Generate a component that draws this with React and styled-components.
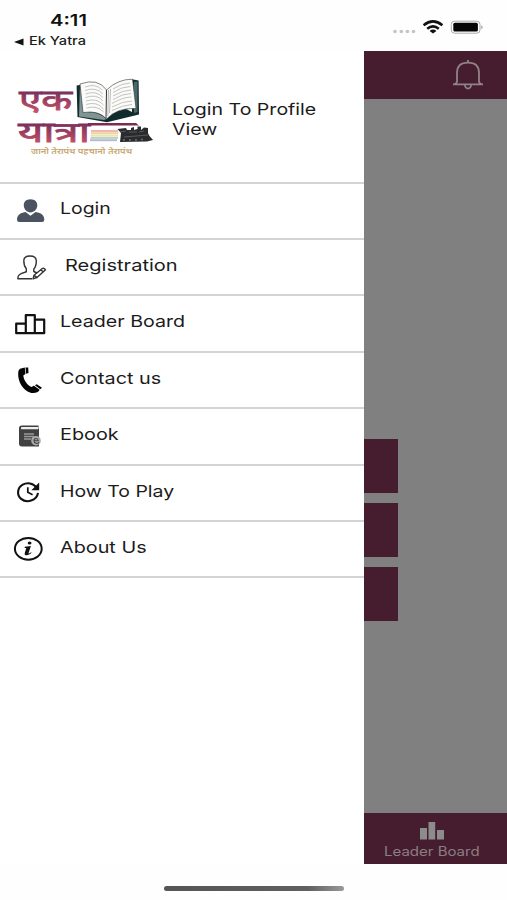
import styled, { createGlobalStyle } from 'styled-components';

const GlobalStyle = createGlobalStyle`
    body {
        margin: 0;
        background: #fff;
        font-family: Inter, 'Liberation Sans', sans-serif;
    }

    svg {
        display: block;
    }
`;

const Screen = styled.div`
    width: 507px;
    height: 900px;
    display: flex;
    flex-direction: column;
    overflow: hidden;
    background: #fefefe;
    color: #1c1c1c;
`;

const Wide = styled.span`
    display: inline-block;
    white-space: nowrap;
    transform: scaleX(${(props) => props.$stretch || 1.2});
    transform-origin: ${(props) => props.$origin || 'left'};
`;

const StatusBar = styled.header`
    height: 51px;
    flex: none;
    display: flex;
    justify-content: space-between;
    box-sizing: border-box;
    padding: 10px 23px 0 14px;
`;

const Time = styled.div`
    margin-left: 36px;
    font-size: 16px;
    line-height: 20px;
    font-weight: 600;
    color: #111;
`;

const BackLink = styled.div`
    display: flex;
    align-items: center;
    gap: 5px;
    margin-top: 4px;
    font-size: 11.5px;
    line-height: 15px;
    font-weight: 500;
`;

const Signals = styled.div`
    display: flex;
    align-items: flex-start;
    padding-top: 9px;
`;

const Body = styled.div`
    height: 813px;
    flex: none;
    display: flex;
`;

const Drawer = styled.aside`
    width: 364px;
    flex: none;
    background: #fff;
`;

const Profile = styled.div`
    height: 130.5px;
    display: flex;
    box-sizing: border-box;
    padding: 25px 0 0 14px;
`;

const ProfileText = styled.p`
    margin: 23px 0 0 18px;
    font-size: 16.5px;
    line-height: 20px;
`;

const Menu = styled.nav`
    border-top: 2px solid #d4d4d4;
`;

const MenuItem = styled.div`
    height: 56.43px;
    display: flex;
    align-items: center;
    box-sizing: border-box;
    border-bottom: 2px solid #d4d4d4;
    font-size: 16.5px;
`;

const IconSlot = styled.div`
    width: ${(props) => (props.$wide ? 65 : 60)}px;
    flex: none;
`;

const Label = styled.div`
    line-height: 20px;
    padding-bottom: 4.5px;
`;

const Page = styled.main`
    flex: 1;
    display: flex;
    flex-direction: column;
    background: #808080;
`;

const AppBar = styled.div`
    height: 47.5px;
    display: flex;
    justify-content: flex-end;
    box-sizing: border-box;
    padding: 8px 23px 0 0;
    background: #461d2e;
`;

const Buttons = styled.div`
    flex: 1;
    display: flex;
    flex-direction: column;
    gap: 10.5px;
    padding-top: 340.5px;
`;

const PageButton = styled.div`
    width: 34px;
    height: 53.5px;
    background: #461d2e;
`;

const TabBar = styled.div`
    height: 51.5px;
    box-sizing: border-box;
    padding: 8px 7px 0 0;
    display: flex;
    flex-direction: column;
    align-items: center;
    gap: 4px;
    background: #461d2e;
    color: #8c7d84;
    font-size: 12.5px;
    line-height: 16px;
`;

const HomeArea = styled.footer`
    flex: 1;
    display: flex;
    justify-content: center;
    padding-top: 22px;
`;

const HomeIndicator = styled.div`
    width: 180px;
    height: 5px;
    border-radius: 3px;
    background: linear-gradient(90deg, #555 0, #606060 80%, #999 100%);
`;

function SignalIcons() {
    return (
        <svg width="92" height="18" viewBox="392 19 92 18">
            <g fill="#c4c4c4">
                <circle cx="395" cy="31.5" r="1.8" />
                <circle cx="401.3" cy="31.5" r="1.8" />
                <circle cx="407.4" cy="31.5" r="1.8" />
                <circle cx="413.5" cy="31.5" r="1.8" />
            </g>
            <g fill="none" stroke="#111" strokeWidth="2.5">
                <path d="M423.6 25.2 Q433 17.5 442.4 25.2" />
                <path d="M427.2 28.7 Q433 24 438.8 28.7" />
            </g>
            <path d="M429.6 30.9 Q433 28.2 436.4 30.9 L433 33.4Z" fill="#111" />
            <rect x="451.3" y="21.2" width="28.7" height="12" rx="3.2" fill="#fff" stroke="#aaa" />
            <rect x="453.3" y="22.8" width="24.6" height="8.8" rx="1.5" fill="#050505" />
            <path d="M481.3 25.2 Q484 27.2 481.3 29.2Z" fill="#999" />
        </svg>
    );
}

function BookLines({ d }) {
    return <path d={d} fill="none" stroke="#b4b4b4" strokeWidth=".8" />;
}

function Logo() {
    return (
        <svg width="140" height="84" viewBox="14 76 140 84">
            <defs>
                <linearGradient id="wine" x1="0" y1=".2" x2="0" y2=".8">
                    <stop offset="0" stopColor="#7b2f5c" />
                    <stop offset="1" stopColor="#cb5469" />
                </linearGradient>
            </defs>
            <g
                fill="url(#wine)"
                stroke="url(#wine)"
                strokeWidth=".8"
                fontFamily="'Noto Sans Devanagari', 'Noto Sans', sans-serif"
                fontWeight="400"
            >
                <text x="19" y="109.5" fontSize="28" textLength="53" lengthAdjust="spacingAndGlyphs">एक</text>
                <text x="18" y="141.5" fontSize="28" textLength="72" lengthAdjust="spacingAndGlyphs">यात्रा</text>
            </g>
            <path d="M88 123H136L139 125.6H88Z" fill="#7b2c51" />
            <path d="M80 85L76.6 85.5L77.5 117L107 122.2L139 114.5L138.6 80.5L132 79.3V112Z" fill="#102c2d" />
            <path d="M134 82L137.5 81.5V112L134 113Z" fill="#4c6a6a" />
            <path d="M80 84L83.5 112Q99 111 106.5 119L104 120L79 116.5Z" fill="#7e9594" />
            <path d="M80 84Q98 77.5 106.5 90Q118 79 132.5 79.2L136 108.5Q117 107.5 106.5 119Q99 110 83 112.5Z" fill="#fbfbfa" stroke="#333" strokeWidth=".6" />
            <path d="M106.5 90L106 118.5" stroke="#333" />
            <path d="M108.5 90L107.8 116M110.5 89L109.5 113" stroke="#bbb" strokeWidth="1" />
            <BookLines d="M85 87Q96 83 102 90M85 90.5Q96 86.5 103 94M85.5 94Q96 90 103 97.5M85.5 97.5Q97 93.5 103 101M86 101Q97 97.5 103.5 105M86 104.5Q97 101 103.5 109M86.5 108Q97 105 103.5 112" />
            <BookLines d="M113 89Q122 83 130 83M113 92.5Q122 86.5 130.5 86.5M113 96Q123 90 131 90M113 99.5Q123 93.5 131 93.5M112 103.5Q123 97 131.5 97M112 107Q123 101 132 101M112 110.5Q123 105 132 104.5" />
            <g strokeWidth="2" fill="none">
                <path d="M91 131H118" stroke="#f0b7b2" />
                <path d="M91 133.3H118" stroke="#f3cda3" />
                <path d="M90.5 135.6H118" stroke="#eee5ae" />
                <path d="M90.5 137.9H118" stroke="#b5d7b9" />
                <path d="M90 140.2H117" stroke="#b4b8dc" />
            </g>
            <path d="M117.5 129L126 128L127 130H131V128L134 127V130L137.5 129V126.5H141V130L144 127.5L148 128V133L149.5 136L153 140L147 141.5L120 142L121 133Z" fill="#292b2d" />
            <path d="M120 132L126 131M129 132L137 132M139 132L144 131M124 137L148 135" stroke="#666" strokeWidth=".8" fill="none" />
            <g fill="#777">
                <circle cx="124" cy="140" r=".9" />
                <circle cx="130" cy="140" r=".9" />
                <circle cx="136" cy="140" r=".9" />
                <circle cx="142" cy="139.5" r=".9" />
            </g>
            <text x="31" y="153.5" fill="#c7a670" fontFamily="'Noto Sans Devanagari', 'Noto Sans', sans-serif" fontSize="7.5" fontWeight="600" textLength="101" lengthAdjust="spacingAndGlyphs">
                जानो तेरापंथ पहचानो तेरापंथ
            </text>
        </svg>
    );
}

// Menu icons share a 60x54 box so each one keeps its own optical offset
function MenuIcon({ children }) {
    return (
        <svg width="60" height="54" viewBox="0 0 60 54" fill="none">
            {children}
        </svg>
    );
}

const items = [
    {
        label: 'Login',
        stretch: 1.18,
        icon: (
            <g fill="#4b5361">
                <path d="M30.5 15.2C26 15.2 23.5 18 23.8 21.6C24 25.5 27 28.5 30.5 28.5C34 28.5 37 25.5 37.3 21.6C37.5 18 35 15.2 30.5 15.2Z" />
                <path d="M25.5 28L30.5 31.7L35.5 28C42 29 44.3 31.5 44.3 35.8Q44.3 38 42 38H19.2Q17 38 17 35.8C17 31.5 19.5 29 25.5 28Z" />
            </g>
        ),
    },
    {
        label: 'Registration',
        stretch: 1.215,
        wide: true,
        icon: (
            <g stroke="#333" strokeWidth="1.4" strokeLinejoin="round">
                <path d="M32 38.8H17.8C17.5 34.5 20.5 33.7 26.3 31.8V28.8C24.3 26.5 23.8 23.5 23.8 20.8C23.8 17.3 26.3 16 30 16C34 16 36.3 17.4 36.3 21C36.3 24 35.9 26.8 33.8 29V31.5L37 33" />
                <path d="M33 38.9L34 35.3L42 28.7Q44 27.6 45.5 29.8L37 37.5ZM34.3 35.5L37 37.3M40.7 29.8L43.4 32" />
            </g>
        ),
    },
    {
        label: 'Leader Board',
        stretch: 1.19,
        icon: (
            <path d="M16.2 36.2V26.7H25.8V18.2H34.8V22.7H44.2V36.2ZM25.8 26.5V36M34.8 22.7V36" stroke="#111" strokeWidth="2.2" strokeLinejoin="round" />
        ),
    },
    {
        label: 'Contact us',
        stretch: 1.2,
        icon: (
            <g fill="#050505">
                <path d="M20 15.8L24.8 14.6L25.4 21L23.3 22.5C24 27.7 27 31.7 31.2 34L34 32.8L39.6 36.8C38.5 39.5 34.3 40.7 30.5 39.7C22.6 37.2 17.6 28.2 18.2 19.7C18.4 17.8 19 16.6 20 15.8Z" />
                <path d="M25.5 14.5L28.2 14.4L28.5 20L26 20.7ZM34.9 32.2L36.8 31.2L42 34.8L40.3 36.2Z" />
            </g>
        ),
    },
    {
        label: 'Ebook',
        stretch: 1.2,
        icon: (
            <g>
                <path d="M19 19Q19 16.5 22 16.5H38.5V20H39V37.5H22Q19 37.5 19 34.5Z" fill="#414141" />
                <path d="M21.5 18H38V20.3H21.5Q20 19.2 21.5 18Z" fill="#eee" />
                <path d="M24 25H34M24 27.5H34M24 30H31" stroke="#999" strokeWidth="1.5" />
                <circle cx="36" cy="31.7" r="4.8" fill="#aaa" />
                <path d="M33.8 31.7H38.3C38 28.7 34 28.9 34 31.8C34 34.7 37.6 35 39 33.3" stroke="#444" strokeWidth="1.1" />
            </g>
        ),
    },
    {
        label: 'How To Play',
        stretch: 1.18,
        icon: (
            <g stroke="#111" strokeWidth="2.1">
                <path d="M36.3 21.3C33.2 16.9 27 16.2 22.7 18.7C17 22 16.7 29.3 21.1 32.9C26.5 37.3 36.8 35 38 26.8" />
                <path d="M39.2 16.5V24.2H31.4Z" fill="#111" stroke="none" />
                <path d="M27.8 21.2V26.3L32.6 28.7" strokeWidth="1.7" />
            </g>
        ),
    },
    {
        label: 'About Us',
        stretch: 1.2,
        icon: (
            <g>
                <ellipse cx="28.3" cy="26.8" rx="13.4" ry="10.9" stroke="#111" strokeWidth="2" />
                <ellipse cx="29.6" cy="20.9" rx="1.9" ry="1.5" fill="#111" />
                <path d="M24.8 24.8L30.9 24.1L28.4 31.5Q29.5 31.7 31 30.2L31.6 30.8C29.3 33.5 24 34.5 24.7 31.3L26.3 25.9H24.6Z" fill="#111" />
            </g>
        ),
    },
];

function Bell() {
    return (
        <svg width="32" height="32" viewBox="0 0 32 32" fill="none" stroke="#8f8387" strokeWidth="1.8">
            <path d="M1 25.3Q5 25.3 5 22V14C5 7 9.5 3.7 16 3.7C22.5 3.7 27 7 27 14V22Q27 25.3 31 25.3M1 25.3H31" />
            <path d="M16 1V4M12.8 25.5Q13.3 29.5 16 29.5Q18.7 29.5 19.2 25.5" />
        </svg>
    );
}

export default function App() {
    return (
        <>
            <GlobalStyle />
            <Screen>
                <StatusBar>
                    <div>
                        <Time>
                            <Wide $stretch={1.26}>4:11</Wide>
                        </Time>
                        <BackLink>
                            <svg width="10" height="8" viewBox="0 0 10 8">
                                <path d="M0 4L9.5 .5V7.5Z" fill="#111" />
                            </svg>
                            <Wide $stretch={1.27}>Ek Yatra</Wide>
                        </BackLink>
                    </div>
                    <Signals>
                        <SignalIcons />
                    </Signals>
                </StatusBar>
                <Body>
                    <Drawer>
                        <Profile>
                            <Logo />
                            <ProfileText>
                                <Wide $stretch={1.185}>Login To Profile</Wide>
                                <br />
                                <Wide $stretch={1.185}>View</Wide>
                            </ProfileText>
                        </Profile>
                        <Menu>
                            {items.map((item) => (
                                <MenuItem key={item.label}>
                                    <IconSlot $wide={item.wide}>
                                        <MenuIcon>{item.icon}</MenuIcon>
                                    </IconSlot>
                                    <Label>
                                        <Wide $stretch={item.stretch}>{item.label}</Wide>
                                    </Label>
                                </MenuItem>
                            ))}
                        </Menu>
                    </Drawer>
                    <Page>
                        <AppBar>
                            <Bell />
                        </AppBar>
                        <Buttons>
                            <PageButton />
                            <PageButton />
                            <PageButton />
                        </Buttons>
                        <TabBar>
                            <svg width="24" height="19" viewBox="0 0 24 19" fill="#8c8c8c">
                                <path d="M0 7H7V18.5H0ZM8.5 1H15.2V18.5H8.5ZM17 9H24V18.5H17Z" />
                            </svg>
                            <Wide $origin="center">Leader Board</Wide>
                        </TabBar>
                    </Page>
                </Body>
                <HomeArea>
                    <HomeIndicator />
                </HomeArea>
            </Screen>
        </>
    );
}
